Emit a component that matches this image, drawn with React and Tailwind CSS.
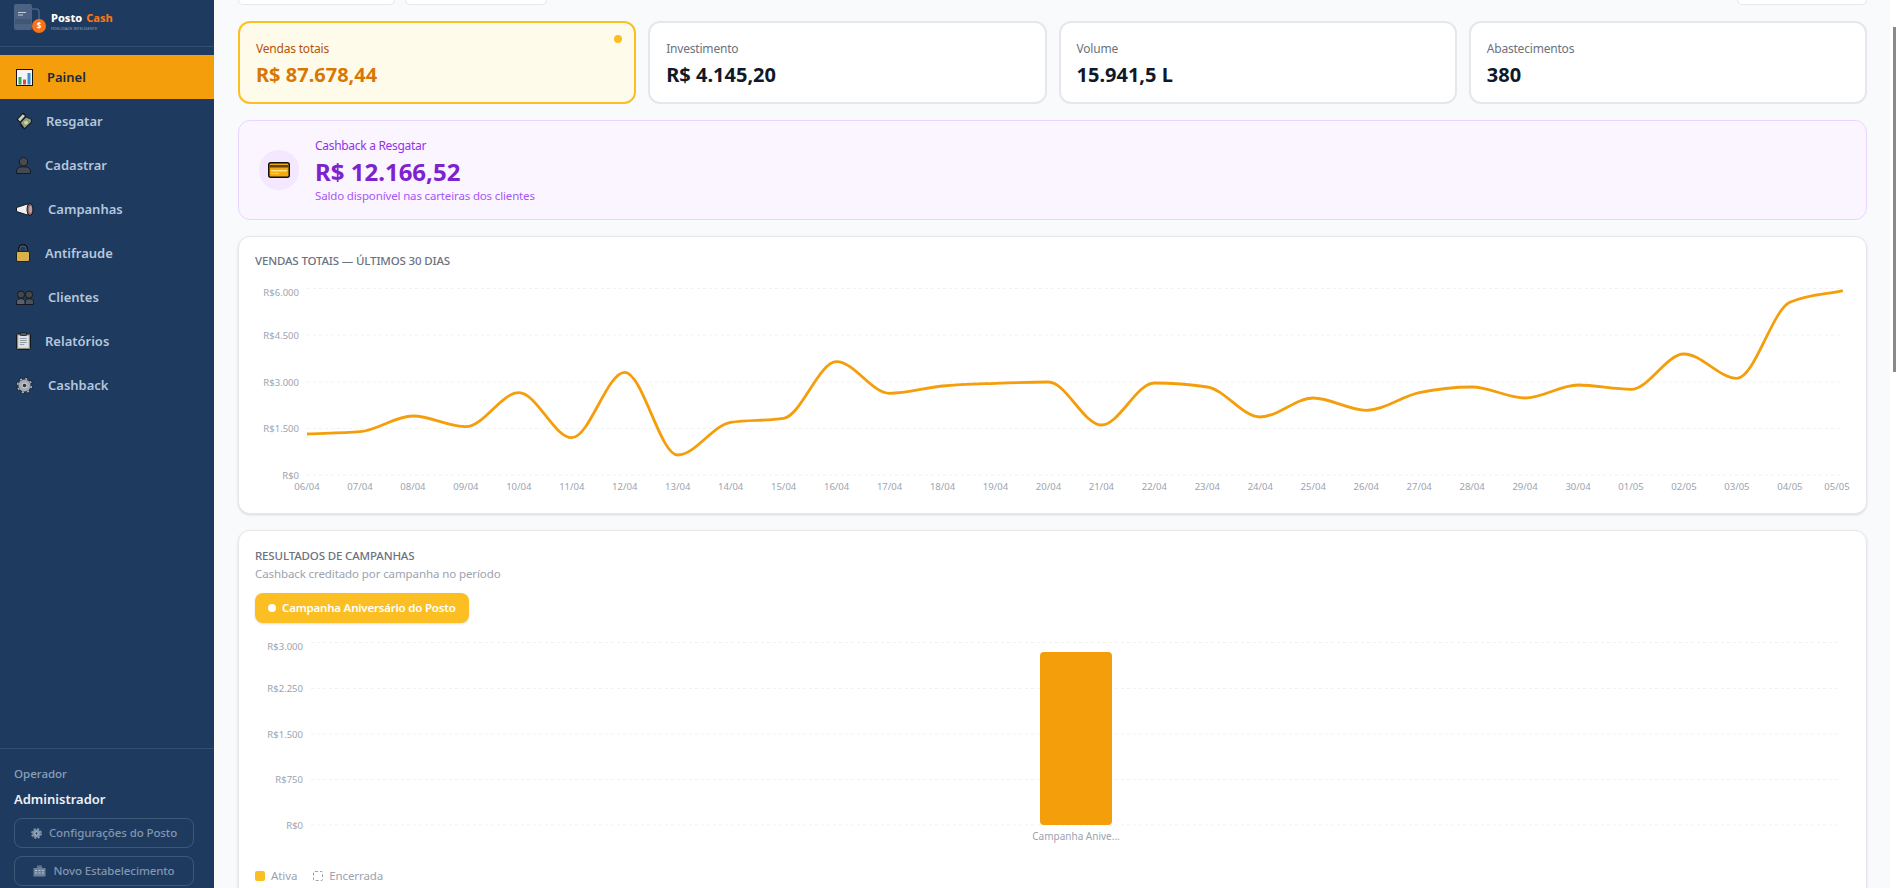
const FONT = "font-['Noto_Sans','Liberation_Sans',sans-serif]";

// y em pixels da pagina para cada dia; x = 307 + 52.96 * i
const salesY = [434, 431.7, 416, 426.7, 392.7, 437.7, 372.3, 455, 422.3, 418.3, 361.7, 393.3, 386, 383.3, 382, 425, 383, 387, 417, 398, 410.3, 392.7, 387, 398, 385, 389.3, 354, 378.3, 302.3, 290.7];
const salesDays = ['06/04', '07/04', '08/04', '09/04', '10/04', '11/04', '12/04', '13/04', '14/04', '15/04', '16/04', '17/04', '18/04', '19/04', '20/04', '21/04', '22/04', '23/04', '24/04', '25/04', '26/04', '27/04', '28/04', '29/04', '30/04', '01/05', '02/05', '03/05', '04/05', '05/05'];
const salesX = (i) => 307 + 52.96 * i;

// curva monotone, mesma conta do d3/recharts
const monotonePath = (xs, ys) => {
    const n = xs.length;
    const d = [];
    for (let i = 0; i < n - 1; i++) d.push((ys[i + 1] - ys[i]) / (xs[i + 1] - xs[i]));
    const m = [d[0]];
    for (let i = 1; i < n - 1; i++) {
        const h0 = xs[i] - xs[i - 1];
        const h1 = xs[i + 1] - xs[i];
        const p = (d[i - 1] * h1 + d[i] * h0) / (h0 + h1);
        m.push((Math.sign(d[i - 1]) + Math.sign(d[i])) * Math.min(Math.abs(d[i - 1]), Math.abs(d[i]), 0.5 * Math.abs(p)) || 0);
    }
    m.push(d[n - 2]);
    let path = `M${xs[0]},${ys[0]}`;
    for (let i = 0; i < n - 1; i++) {
        const h = (xs[i + 1] - xs[i]) / 3;
        path += `C${xs[i] + h},${ys[i] + m[i] * h} ${xs[i + 1] - h},${ys[i + 1] - m[i + 1] * h} ${xs[i + 1]},${ys[i + 1]}`;
    }
    return path;
};

const PainelIcon = () => (
    <svg width="17" height="17" viewBox="0 0 17 17">
        <rect x="0.5" y="0.5" width="16" height="16" fill="#f4f4f4" stroke="#111" />
        <rect x="2.5" y="8" width="3" height="7.5" fill="#35a853" />
        <rect x="7" y="10.5" width="3" height="5" fill="#e5482d" />
        <rect x="11.5" y="4" width="3" height="11.5" fill="#3a8fdc" />
    </svg>
);

const ResgatarIcon = () => (
    <svg width="17" height="18" viewBox="0 0 17 18">
        <path d="M.5 7.500 7 .5l2 1.500 1.500 3 6 2.500-1 3.500L8.500 17.500l-4-3.500-.5-3Z" fill="#141a22" />
        <path d="M2 7.300 6.800 2.200 9 4 4 9.500Z" fill="#d2cfb4" />
        <path d="M4.800 10.800 10 5.500l5.200 2.300-.6 2.400-6.100 5.900Z" fill="#8fa27c" />
        <circle cx="10" cy="10.600" r="1.900" fill="#c9d6b3" />
    </svg>
);

const CadastrarIcon = () => (
    <svg width="15" height="17" viewBox="0 0 15 17">
        <circle cx="7.500" cy="4.800" r="4.200" fill="#4b4b4b" stroke="#15191f" />
        <path d="M.6 16.500v-2.800c0-2.400 2.500-3.900 6.900-3.900s6.900 1.500 6.900 3.900v2.800Z" fill="#434a54" stroke="#15191f" />
    </svg>
);

const CampanhasIcon = () => (
    <svg width="18" height="13" viewBox="0 0 18 13">
        <path d="M.5 4.500 12 .8v11.400L.5 8.500Z" fill="#eef0f2" stroke="#15191f" />
        <ellipse cx="14" cy="6.500" rx="3" ry="6" fill="#8a6a6a" stroke="#15191f" />
        <ellipse cx="14.500" cy="6.500" rx="1.400" ry="3.800" fill="#c9a0a0" />
    </svg>
);

const AntifraudeIcon = () => (
    <svg width="14" height="18" viewBox="0 0 14 18">
        <path d="M3 8V5a4 4 0 0 1 8 0v3" fill="none" stroke="#11151b" strokeWidth="2.200" />
        <path d="M3.800 8V5a3.200 3.200 0 0 1 6.400 0v3" fill="none" stroke="#8d99a8" strokeWidth=".6" />
        <rect x=".5" y="7.500" width="13" height="10" rx="1.400" fill="#d7b24a" stroke="#222" />
    </svg>
);

const ClientesIcon = () => (
    <svg width="18" height="15" viewBox="0 0 18 15">
        <path d="M9 14.500v-2.600c0-2 1.800-3.200 4.300-3.200s4.200 1.200 4.200 3.200v2.600Z" fill="#4a5159" stroke="#15191f" />
        <circle cx="13" cy="4.600" r="3.600" fill="#474747" stroke="#15191f" />
        <path d="M.5 14.500v-2.600c0-2 1.800-3.200 4.300-3.200S9 9.900 9 11.900v2.600Z" fill="#59616a" stroke="#15191f" />
        <circle cx="5" cy="4.600" r="3.600" fill="#474747" stroke="#15191f" />
    </svg>
);

const RelatoriosIcon = () => (
    <svg width="15" height="18" viewBox="0 0 15 18">
        <rect x=".5" y="1.800" width="14" height="15.700" rx="1" fill="#8f8a7e" stroke="#15191f" />
        <rect x="2.200" y="3.500" width="10.600" height="12.400" fill="#dfe3e7" />
        <rect x="4.500" y=".5" width="6" height="3" rx=".6" fill="#4e5660" stroke="#15191f" strokeWidth=".7" />
        <path d="M3.800 6.500h7M3.800 8.500h7M3.800 10.500h7M3.800 12.500h4.500" stroke="#7f8a96" strokeWidth=".8" />
    </svg>
);

const GearIcon = ({ size = 17, fill = '#a3aab2', line = '#1a2028', hole = '#2f3640' }) => (
    <svg width={size} height={size} viewBox="0 0 17 17">
        <circle cx="8.500" cy="8.500" r="6.900" fill="none" stroke={line} strokeWidth="3.200" strokeDasharray="3.200 2.220" />
        <circle cx="8.500" cy="8.500" r="6.900" fill="none" stroke={fill} strokeWidth="1.800" strokeDasharray="2.200 3.220" strokeDashoffset="-.5" />
        <circle cx="8.500" cy="8.500" r="6" fill={fill} />
        <circle cx="8.500" cy="8.500" r="3" fill="#c3c8ce" />
        <circle cx="8.500" cy="8.500" r="1.800" fill={hole} />
    </svg>
);

const CardIcon = () => (
    <svg width="22" height="16" viewBox="0 0 22 16">
        <rect x=".75" y=".75" width="20.500" height="14.500" rx="2" fill="#f5a90a" stroke="#111" strokeWidth="1.500" />
        <rect x="1.500" y="3" width="19" height="2.500" fill="#5c4310" />
        <rect x="3" y="8" width="16" height="1.500" fill="#ffe08a" />
        <rect x="3" y="11" width="8" height=".8" fill="#ffe08a" />
    </svg>
);

const BuildingIcon = () => (
    <svg width="13" height="12" viewBox="0 0 13 12">
        <rect x="4" y=".5" width="5" height="3" fill="#5f7690" />
        <rect x=".5" y="3" width="12" height="8.500" fill="#6b819a" />
        <path d="M2 5.500h2M5.500 5.500h2M9 5.500h2M2 8h2M5.500 8h2M9 8h2" stroke="#c0ccd9" strokeWidth=".9" />
    </svg>
);

const Logo = () => (
    <div className="flex items-start">
        <svg width="34" height="30" viewBox="0 0 34 30" className="ml-[14px] mt-[4px] shrink-0">
            <rect x="0" y="0" width="18" height="26" rx="2" fill="#4b6283" />
            <rect x="1" y="15" width="16" height="5" fill="#3f5674" />
            <path d="M18 5h4a3 3 0 0 1 3 3v10" fill="none" stroke="#4b6283" strokeWidth="1.500" />
            <rect x="4" y="8" width="8" height="1" fill="#c3cfdc" />
            <rect x="4" y="10.500" width="5" height="1" fill="#c3cfdc" />
            <circle cx="25" cy="22" r="7" fill="#f97316" />
            <text x="25" y="25" textAnchor="middle" fontSize="8" fontWeight="700" fill="#fff" fontFamily="Noto Sans">$</text>
        </svg>
        <div className="ml-[3px] mt-[11px]">
            <p className="text-[11px] leading-[14px] font-extrabold text-white whitespace-nowrap">
                Posto <span className="ml-[1px] text-[#f97316]">Cash</span>
            </p>
            <p className="text-[3.800px] leading-[5px] text-[#8fa3bb] uppercase whitespace-nowrap mt-[1px]">Fidelidade Inteligente</p>
        </div>
    </div>
);

const navItems = [
    { label: 'Painel', icon: <PainelIcon />, gap: 'ml-[14px]', active: true },
    { label: 'Resgatar', icon: <ResgatarIcon />, gap: 'ml-[13px]' },
    { label: 'Cadastrar', icon: <CadastrarIcon />, gap: 'ml-[14px]' },
    { label: 'Campanhas', icon: <CampanhasIcon />, gap: 'ml-[14px]' },
    { label: 'Antifraude', icon: <AntifraudeIcon />, gap: 'ml-[15px]' },
    { label: 'Clientes', icon: <ClientesIcon />, gap: 'ml-[14px]' },
    { label: 'Relatórios', icon: <RelatoriosIcon />, gap: 'ml-[14px]' },
    { label: 'Cashback', icon: <GearIcon />, gap: 'ml-[15px]' },
];

const Sidebar = () => (
    <aside className="w-[214px] shrink-0 h-full flex flex-col bg-[#1e3a5f]">
        <div className="h-[47px] border-b border-white/10 overflow-hidden">
            <Logo />
        </div>
        <nav className="py-2">
            {navItems.map((item) => (
                <div
                    key={item.label}
                    className={`h-[44px] pl-4 flex items-center text-[13px] font-semibold ${item.active ? 'bg-[#f59e0b] text-[#1e293b]' : 'text-[#b6c7dc]'}`}
                >
                    {item.icon}
                    <span className={`pt-[1px] ${item.gap}`}>{item.label}</span>
                </div>
            ))}
        </nav>
        <div className="mt-auto border-t border-white/10 px-[14px] pt-[17px] pb-[2px]">
            <p className="text-[11.500px] leading-[16px] font-medium text-[#8ba0b8]">Operador</p>
            <p className="text-[13px] leading-[18px] mt-[8px] font-semibold text-[#eef2f7]">Administrador</p>
            <div className="mt-[10px] flex flex-col gap-2">
                <div className="w-[180px] h-[30px] rounded-lg border border-white/15 flex items-center justify-center gap-[7px] text-[11.500px] tracking-[-0.1px] font-medium text-[#8196af]">
                    <GearIcon size={11} fill="#8394a8" line="#71839a" hole="#1e3a5f" />
                    Configurações do Posto
                </div>
                <div className="w-[180px] h-[30px] rounded-lg border border-white/15 flex items-center justify-center gap-[7px] text-[11.500px] tracking-[-0.1px] font-medium text-[#8196af]">
                    <BuildingIcon />
                    Novo Estabelecimento
                </div>
            </div>
        </div>
    </aside>
);

const MetricCard = ({ label, value, active }) => (
    <div className={`relative h-[83px] rounded-xl border-2 px-4 pt-4 ${active ? 'bg-[#fffbeb] border-[#fbbf24]' : 'bg-white border-[#e5e7eb]'}`}>
        <p className={`text-[12px] tracking-[-0.2px] leading-[19px] ${active ? 'text-[#b45309]' : 'text-[#6b7280]'}`}>{label}</p>
        <p className={`text-[20px] leading-[30px] mt-[2px] font-bold ${active ? 'text-[#d97706]' : 'text-[#111827]'}`}>{value}</p>
        {active && <span className="absolute top-[12px] right-[12px] w-2 h-2 rounded-full bg-[#fbbf24]" />}
    </div>
);

const salesPath = monotonePath(salesY.map((_, i) => salesX(i)), salesY);

const SalesChart = () => (
    <svg viewBox="255 278 1595 222" className="block w-[1595px] h-[222px] mt-2">
        {[
            [288.5, 'R$6.000', 4],
            [335, 'R$4.500', 0],
            [382, 'R$3.000', 0],
            [428.5, 'R$1.500', 0],
            [475, 'R$0', 0],
        ].map(([y, label, shift]) => (
            <g key={label}>
                <line x1="307" x2="1841" y1={y} y2={y} stroke="#f0f1f3" strokeDasharray="3 3" />
                <text x="299" y={y + 3.5 + shift} textAnchor="end" fontSize="9.5" fill="#9ca3af">{label}</text>
            </g>
        ))}
        {salesDays.map((day, i) => (
            <text key={day} x={i === 29 ? 1837 : salesX(i)} y="490" textAnchor="middle" fontSize="9.5" fill="#9ca3af">{day}</text>
        ))}
        <path d={salesPath} fill="none" stroke="#f59e0b" strokeWidth="2.800" />
    </svg>
);

const CampaignChart = () => (
    <svg viewBox="255 630 1595 230" className="block w-[1595px] h-[230px] mt-[7px]">
        {[
            [642.5, 'R$3.000', 4],
            [688.5, 'R$2.250', 0],
            [734, 'R$1.500', 0],
            [779.5, 'R$750', 0],
            [825, 'R$0', 0],
        ].map(([y, label, shift]) => (
            <g key={label}>
                <line x1="311" x2="1839" y1={y} y2={y} stroke="#f0f1f3" strokeDasharray="3 3" />
                <text x="303" y={y + 3.5 + shift} textAnchor="end" fontSize="9.5" fill="#9ca3af">{label}</text>
            </g>
        ))}
        <rect x="1040" y="652" width="72" height="173" rx="4" fill="#f59e0b" />
        <text x="1076" y="840" textAnchor="middle" fontSize="10" fill="#9ca3af">Campanha Anive...</text>
    </svg>
);

export default function App() {
    return (
        <div className={`h-[888px] flex overflow-hidden bg-white ${FONT}`}>
            <Sidebar />
            <main className="flex-1 min-w-0 bg-[#f8fafc] pl-6 pr-[23px] overflow-hidden flex flex-col gap-4">
                <div className="h-[5px] shrink-0 flex gap-[10px]">
                    <div className="w-[157px] bg-white border border-t-0 border-[#e5e7eb] rounded-b-xl" />
                    <div className="w-[142px] bg-white border border-t-0 border-[#e5e7eb] rounded-b-xl" />
                    <div className="w-[130px] ml-auto bg-white border border-t-0 border-[#e5e7eb] rounded-b-xl" />
                </div>

                <div className="grid grid-cols-4 gap-3 shrink-0">
                    <MetricCard label="Vendas totais" value="R$ 87.678,44" active />
                    <MetricCard label="Investimento" value="R$ 4.145,20" />
                    <MetricCard label="Volume" value="15.941,5 L" />
                    <MetricCard label="Abastecimentos" value="380" />
                </div>

                <div className="h-[100px] shrink-0 rounded-xl border border-[#e9d5ff] bg-[#faf5ff] px-5 flex items-center gap-4">
                    <div className="w-10 h-10 rounded-full bg-[#f3e8ff] flex items-center justify-center">
                        <CardIcon />
                    </div>
                    <div>
                        <p className="text-[12px] tracking-[-0.3px] leading-[20px] text-[#9333ea]">Cashback a Resgatar</p>
                        <p className="text-[24px] leading-[32px] font-bold text-[#7e22ce]">R$ 12.166,52</p>
                        <p className="text-[11.500px] tracking-[-0.15px] leading-[16px] text-[#a855f7]">Saldo disponível nas carteiras dos clientes</p>
                    </div>
                </div>

                <section className="shrink-0 h-[278px] rounded-xl border border-[#e5e7eb] bg-white shadow-sm pt-[15px] pl-4">
                    <h3 className="text-[11.500px] leading-[18px] font-medium uppercase tracking-[-0.15px] text-[#6b7280]">Vendas totais — últimos 30 dias</h3>
                    <SalesChart />
                </section>

                <section className="shrink-0 rounded-xl border border-[#e5e7eb] bg-white shadow-sm pt-4 pl-4">
                    <h3 className="text-[11.500px] leading-[18px] font-medium uppercase tracking-[-0.15px] text-[#6b7280]">Resultados de campanhas</h3>
                    <p className="text-[11.500px] tracking-[-0.1px] leading-[18px] text-[#9ca3af]">Cashback creditado por campanha no período</p>
                    <div className="mt-[10px] w-[214px] h-[30px] rounded-lg bg-[#fbbf24] shadow-sm pl-[13px] flex items-center gap-[6px] text-[11.500px] tracking-[-0.2px] font-semibold text-white whitespace-nowrap">
                        <span className="w-2 h-2 rounded-full bg-white" />
                        Campanha Aniversário do Posto
                    </div>
                    <CampaignChart />
                    <div className="mt-2 flex items-center text-[11.500px] tracking-[-0.1px] leading-4 text-[#9ca3af] pb-4">
                        <span className="w-[10px] h-[10px] rounded-[2px] bg-[#fbbf24]" />
                        <span className="ml-[6px]">Ativa</span>
                        <span className="ml-[16px] w-[10px] h-[10px] rounded-[2px] border border-dashed border-[#9ca3af]" />
                        <span className="ml-[6px]">Encerrada</span>
                    </div>
                </section>
            </main>
            <div className="w-[6px] shrink-0 bg-white">
                <div className="ml-auto mt-[27px] w-[3px] h-[345px] bg-[#8a8a8a]" />
            </div>
        </div>
    );
}
